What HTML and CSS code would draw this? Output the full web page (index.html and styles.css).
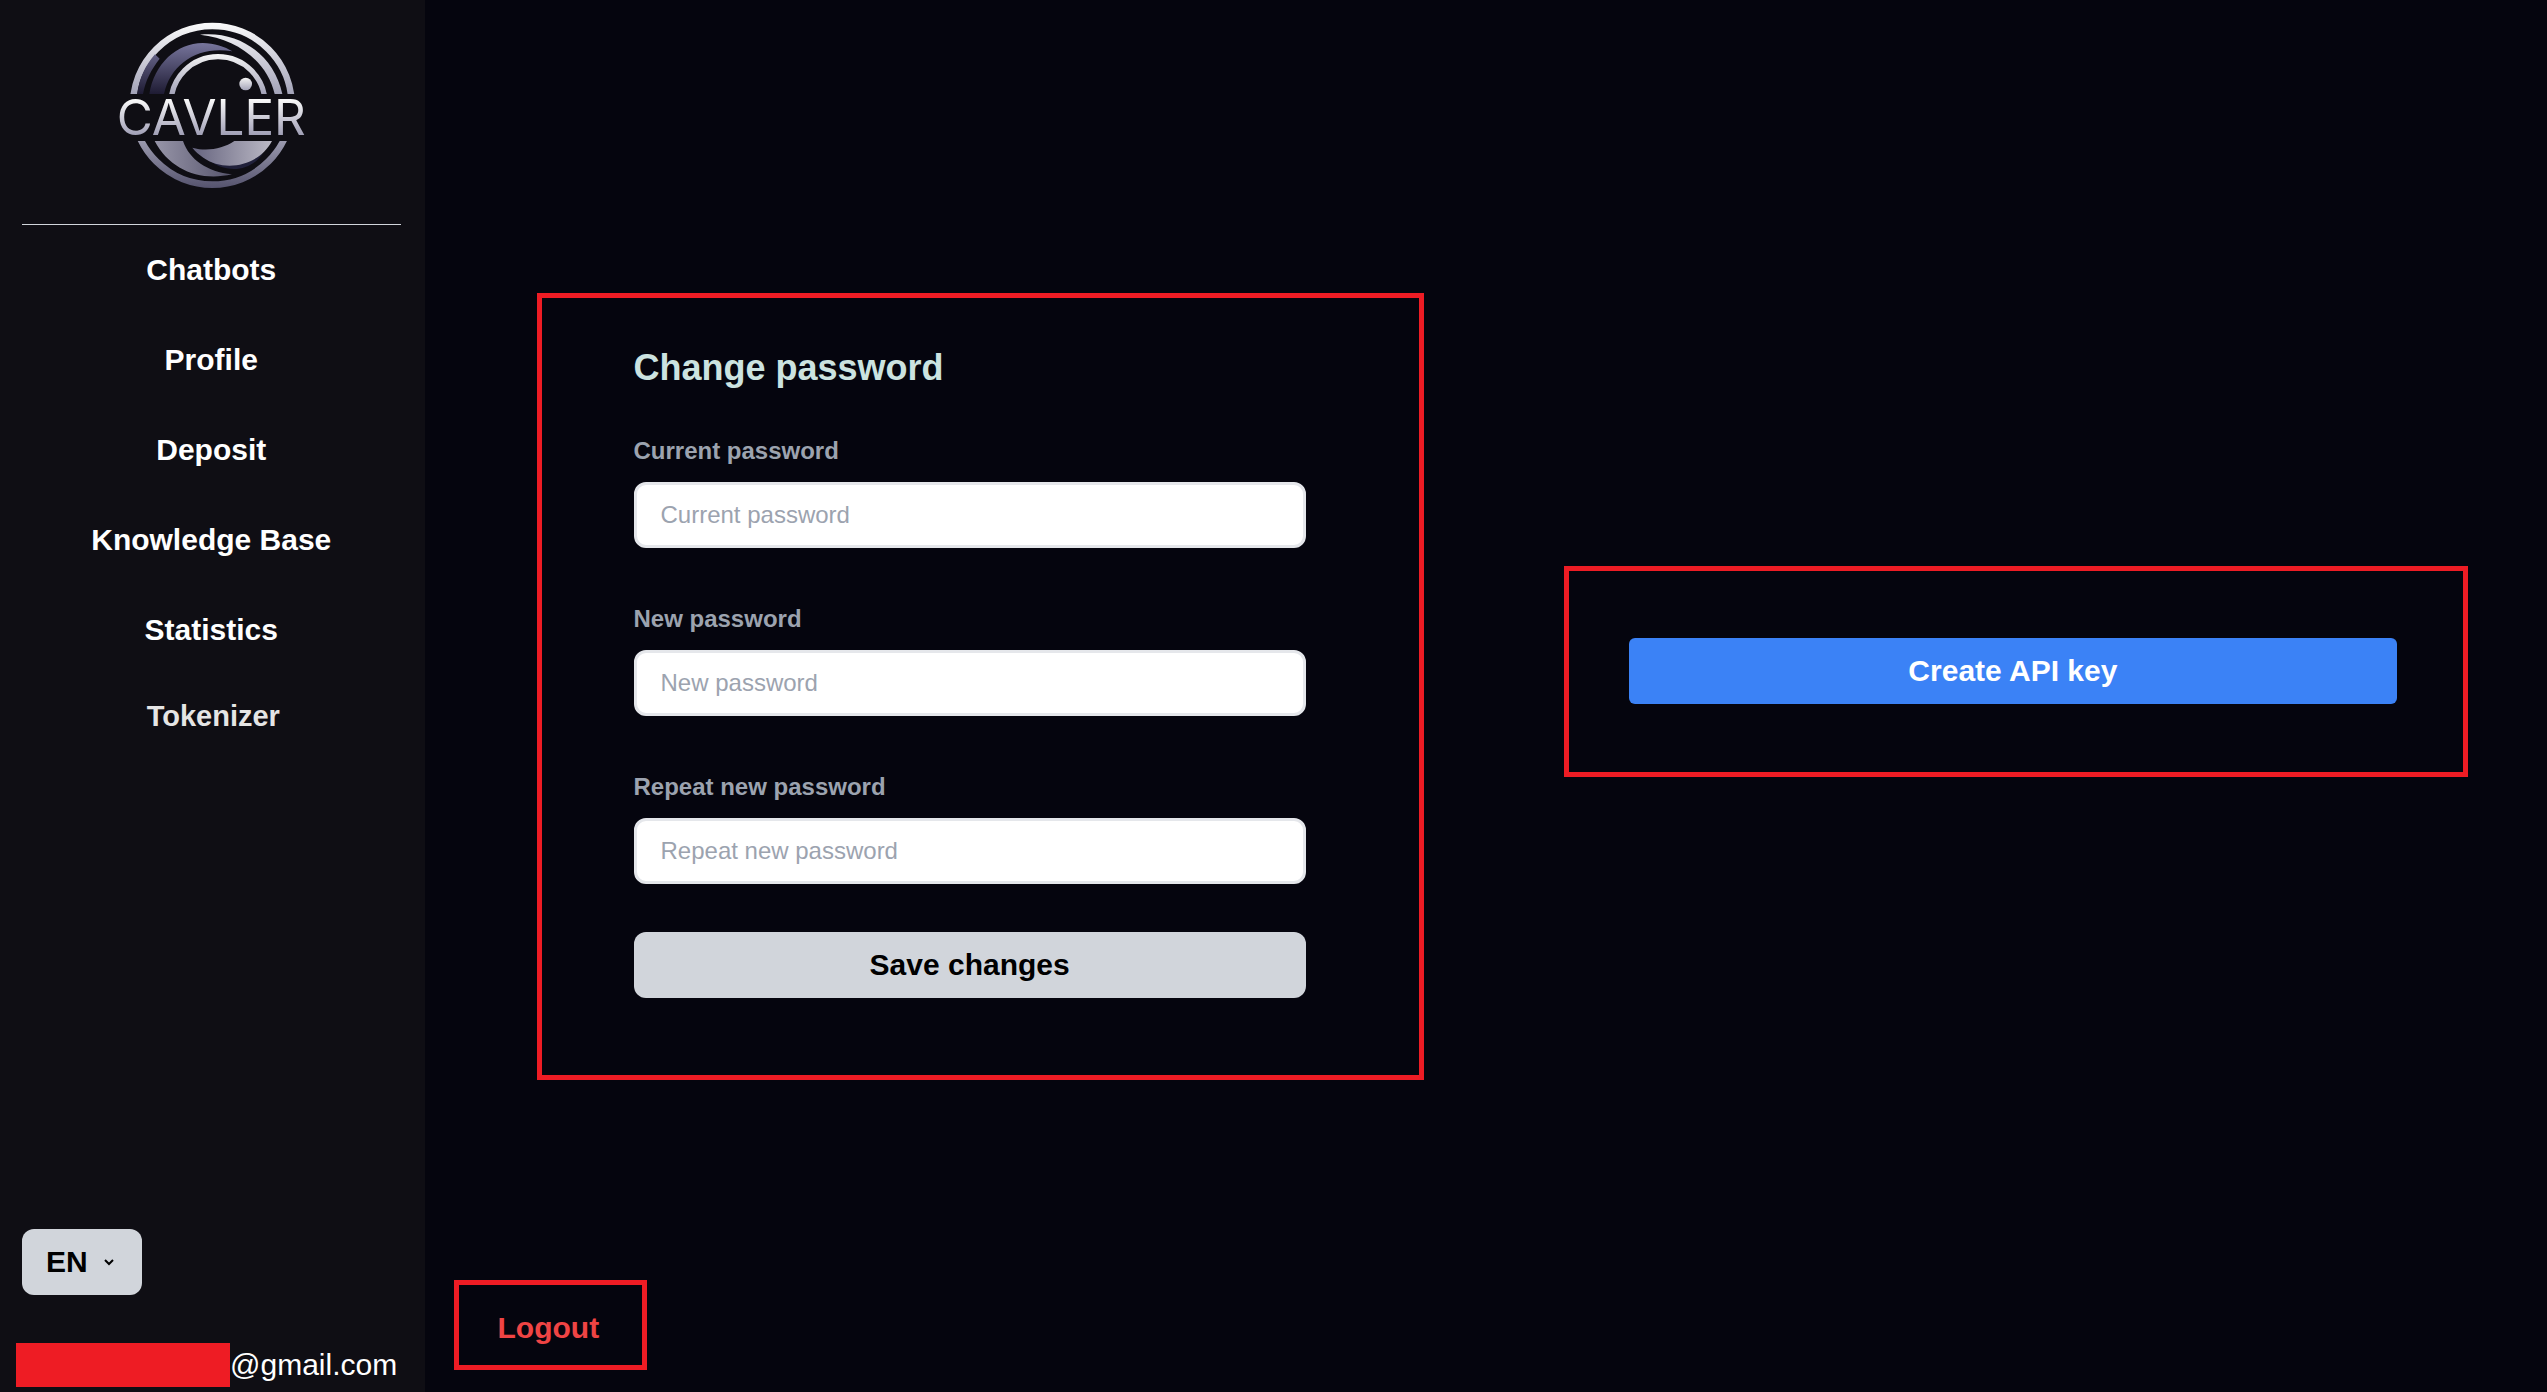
FILE: index.html
```html
<!DOCTYPE html>
<html lang="en">
<head>
    <meta charset="UTF-8">
    <meta name="viewport" content="width=device-width, initial-scale=1.0">
    <title>Cavler - Profile</title>
    <link rel="stylesheet" href="styles.css">
</head>
<body>
<aside class="sidebar">
    <a class="logo" href="/">
        <svg width="200" height="170" viewBox="63 66 600 510" role="img" aria-label="Cavler">
            <defs>
                <linearGradient id="silver" gradientUnits="userSpaceOnUse" x1="0" y1="68" x2="0" y2="282">
                    <stop offset="0" stop-color="#fbfbfb"/>
                    <stop offset="1" stop-color="#a3a3b8"/>
                </linearGradient>
                <linearGradient id="arc" gradientUnits="userSpaceOnUse" x1="0" y1="162" x2="0" y2="282">
                    <stop offset="0" stop-color="#f4f4f4"/>
                    <stop offset="1" stop-color="#a3a3b8"/>
                </linearGradient>
                <linearGradient id="dot" x1="0" y1="0" x2="0" y2="1">
                    <stop offset="0" stop-color="#f4f4f4"/>
                    <stop offset="1" stop-color="#a3a3b8"/>
                </linearGradient>
                <linearGradient id="violet" gradientUnits="userSpaceOnUse" x1="0" y1="129" x2="0" y2="282">
                    <stop offset="0" stop-color="#77759c"/>
                    <stop offset="1" stop-color="#1e1b33"/>
                </linearGradient>
                <linearGradient id="lower" gradientUnits="userSpaceOnUse" x1="0" y1="423" x2="0" y2="564">
                    <stop offset="0" stop-color="#9b9aae"/>
                    <stop offset="1" stop-color="#55536e"/>
                </linearGradient>
                <linearGradient id="wave" x1="0" y1="0" x2="1" y2="0">
                    <stop offset="0" stop-color="#9795a8"/>
                    <stop offset="1" stop-color="#56546c"/>
                </linearGradient>
                <linearGradient id="moon" x1="0" y1="0" x2="1" y2="0">
                    <stop offset="0" stop-color="#66647f"/>
                    <stop offset="1" stop-color="#bbb9c5"/>
                </linearGradient>
                <linearGradient id="word" gradientUnits="userSpaceOnUse" x1="0" y1="300" x2="0" y2="405">
                    <stop offset="0" stop-color="#f8f8f8"/>
                    <stop offset="1" stop-color="#a09fb6"/>
                </linearGradient>
                <clipPath id="top"><rect x="63" y="60" width="600" height="222"/></clipPath>
                <clipPath id="bottom"><rect x="63" y="423" width="600" height="160"/></clipPath>
            </defs>
            <g clip-path="url(#top)" fill="none">
                <circle cx="367" cy="316" r="238" stroke="url(#silver)" stroke-width="20"/>
                <circle cx="384" cy="311" r="141" stroke="url(#arc)" stroke-width="16"/>
                <path fill="url(#silver)" d="M330 104C450 92 552 166 577 282L554 282C532 186 442 116 330 104Z"/>
                <path fill="url(#violet)" d="M178 282C193 190 260 130 338 129C372 129 405 140 427 154C326 136 242 190 222 282Z"/>
                <path fill="url(#violet)" d="M142 282C147 236 166 196 195 163L209 176C184 208 166 242 159 282Z"/>
            </g>
            <circle cx="467" cy="252" r="19" fill="url(#dot)"/>
            <text class="logo-word" x="364" y="404" text-anchor="middle" fill="url(#word)">CAVLER</text>
            <g clip-path="url(#bottom)">
                <circle cx="367" cy="316" r="238" fill="none" stroke="url(#lower)" stroke-width="20"/>
                <path fill="url(#wave)" d="M194 423L279 423C299 480 351 515 426 523C330 545 240 510 194 423Z"/>
                <path fill="#20203a" d="M352 478C408 505 470 500 520 458C478 522 402 518 352 478Z"/>
                <path fill="url(#moon)" d="M307 443C350 455 398 447 433 423L546 423C504 502 400 516 340 473C326 463 316 454 307 443Z"/>
            </g>
        </svg>
    </a>
    <hr class="divider">
    <nav class="menu">
        <a href="/chatbots">Chatbots</a>
        <a href="/profile">Profile</a>
        <a href="/deposit">Deposit</a>
        <a href="/knowledge">Knowledge Base</a>
        <a href="/statistics">Statistics</a>
        <a class="menu-muted" href="/tokenizer">Tokenizer</a>
    </nav>
    <select class="language" aria-label="Language">
        <option>EN</option>
        <option>RU</option>
    </select>
    <div class="account">
        <span class="account-hidden"></span>
        <span>@gmail.com</span>
    </div>
</aside>

<main class="page">
    <div class="panels">
        <form class="frame password-form">
            <h2>Change password</h2>
            <div class="fields">
                <div class="field">
                    <label for="currentPassword">Current password</label>
                    <input type="password" id="currentPassword" placeholder="Current password">
                </div>
                <div class="field">
                    <label for="newPassword">New password</label>
                    <input type="password" id="newPassword" placeholder="New password">
                </div>
                <div class="field">
                    <label for="repeatPassword">Repeat new password</label>
                    <input type="password" id="repeatPassword" placeholder="Repeat new password">
                </div>
            </div>
            <button class="button save" type="submit">Save changes</button>
        </form>
        <section class="frame api">
            <button class="button create" type="button">Create API key</button>
        </section>
    </div>
    <button class="frame logout" type="button">Logout</button>
</main>
</body>
</html>
```
FILE: styles.css
```css
* {
    box-sizing: border-box;
}
body {
    margin: 0;
    min-height: 100vh;
    display: grid;
    grid-template-columns: 1fr 5fr;
    background-color: #05050e;
    color: #fff;
    font-family: "Liberation Sans", Arial, sans-serif;
    font-size: 30px;
}
button, input, select {
    font-family: inherit;
}

/* sidebar */
.sidebar {
    display: flex;
    flex-direction: column;
    padding: 22px 24px 5px 22px;
    background-color: #0f0e14;
}
.logo {
    display: flex;
    justify-content: center;
}
.logo-word {
    font-family: Inter, sans-serif;
    font-size: 148px;
    font-weight: 400;
}
.divider {
    width: 100%;
    height: 1px;
    margin: 32px 0 0;
    border: none;
    background-color: #d1d5db;
}
.menu {
    display: flex;
    flex-direction: column;
    text-align: center;
}
.menu a {
    color: #fff;
    font-weight: bold;
    line-height: 90px;
    text-decoration: none;
}
.menu .menu-muted {
    padding-left: 4px;
    color: #e5e5e5;
    font-size: 29px;
    line-height: 82px;
}
.language {
    appearance: none;
    width: 120px;
    height: 66px;
    margin-top: auto;
    padding: 0 24px 2px;
    border: none;
    border-radius: 12px;
    background: #d1d5db url("data:image/svg+xml,%3Csvg xmlns='http://www.w3.org/2000/svg' width='12' height='8' viewBox='0 0 12 8'%3E%3Cpath d='M2 2l4 4 4-4' fill='none' stroke='%23000' stroke-width='2'/%3E%3C/svg%3E") no-repeat right 27px center;
    color: #000;
    font-size: 30px;
    font-weight: bold;
}
.account {
    display: flex;
    align-items: center;
    margin: 48px -20px 0 -6px;
}
.account-hidden {
    width: 214px;
    height: 44px;
    background-color: #ee1c24;
}

/* profile page */
.page {
    display: flex;
    flex-direction: column;
    align-items: flex-start;
    padding: 93px 79px 22px 29px;
}
.panels {
    flex: 1;
    align-self: stretch;
    display: grid;
    grid-template-columns: 887fr 904fr;
    align-items: center;
    gap: 140px;
    padding-left: 83px;
}
.frame {
    border: 5px solid #ee1c24;
}
.password-form {
    padding: 50px 113px 77px 92px;
}
.password-form h2 {
    margin: 0 0 47px;
    color: #cce3e0;
    font-size: 36px;
    line-height: 40px;
}
.fields {
    display: flex;
    flex-direction: column;
    gap: 55px;
    margin-bottom: 48px;
}
.field label {
    display: block;
    margin-bottom: 15px;
    color: #9ca3af;
    font-size: 24px;
    font-weight: bold;
    line-height: 32px;
}
.field input {
    display: block;
    width: 100%;
    height: 66px;
    padding: 0 24px;
    border: 3px solid #e5e7eb;
    border-radius: 12px;
    background-color: #fff;
    color: #000;
    font-size: 24px;
}
.field input::placeholder {
    color: #9ca3af;
}
.button {
    display: block;
    width: 100%;
    height: 66px;
    border: none;
    font-size: 30px;
    font-weight: bold;
    cursor: pointer;
}
.save {
    border-radius: 12px;
    background-color: #d1d5db;
    color: #000;
}
.api {
    margin-bottom: 30px;
    padding: 67px 66px 68px 60px;
}
.create {
    border-radius: 6px;
    background-color: #3b82f6;
    color: #fff;
}
.logout {
    height: 90px;
    padding: 5px 43px 0 39px;
    background: none;
    color: #ef4444;
    font-size: 30px;
    font-weight: bold;
    cursor: pointer;
}
```
